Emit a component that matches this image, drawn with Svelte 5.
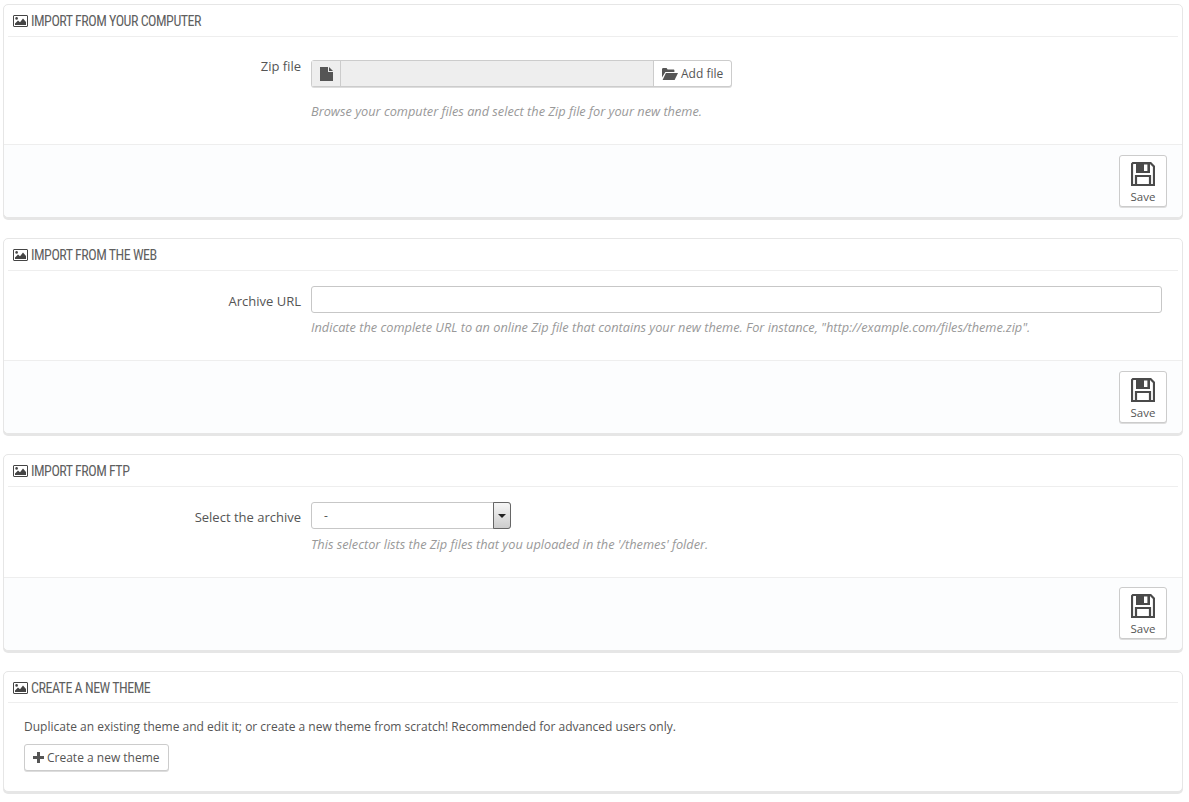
<script lang="ts">
	// mountains and sun of the heading picture icon
	const imageFill = "M2 10V8.5L5 5.5l2 1.8L10 3.5l3 3.5v3z";
</script>

{#snippet heading(title: string)}
	<div class="heading">
		<svg width="15" height="12" viewBox="0 0 15 12" class="himg">
			<rect x="0.5" y="0.5" width="14" height="11" rx="0.5" fill="none" stroke="#444" />
			<circle cx="3.6" cy="3.4" r="1.3" fill="#444" />
			<path d={imageFill} fill="#444" />
		</svg>
		{title}
	</div>
{/snippet}

{#snippet footer()}
	<div class="footer">
		<button class="save">
			<svg width="24" height="24" viewBox="0 0 24 24" fill="none">
				<path d="M2 1h17.5L23 4.5V23H1V2z" stroke="#4a4a4a" stroke-width="2.2" />
				<path d="M5 1h14v10H5z" fill="#4a4a4a" />
				<rect x="13" y="2.5" width="3.4" height="6.5" fill="#fff" />
				<path d="M5 23v-9h14v9" stroke="#4a4a4a" stroke-width="2.2" />
			</svg>
			<span>Save</span>
		</button>
	</div>
{/snippet}

<div class="page">
	<section class="panel">
		{@render heading("Import from your computer")}
		<div class="row first">
			<span class="label">Zip file</span>
			<div class="field">
				<div class="filegroup">
					<span class="addon">
						<svg width="13" height="14" viewBox="0 0 13 14"><path d="M0 0h8v5h5v9H0zM9 0l4 4H9z" fill="#555" /></svg>
					</span>
					<span class="fileval"></span>
					<button class="btn addfile">
						<svg width="16" height="12" viewBox="0 0 16 12"><path d="M0 1.5C0 .7.5 0 1.2 0h3.4l1 1.6h5.8c.6 0 1 .4 1 1V4H3.4L0 9.5zM3.9 5H16l-3.4 7H.6z" fill="#555" /></svg>
						Add file
					</button>
				</div>
				<p class="help wide">Browse your computer files and select the Zip file for your new theme.</p>
			</div>
		</div>
		{@render footer()}
	</section>

	<section class="panel">
		{@render heading("Import from the web")}
		<div class="row">
			<span class="label">Archive URL</span>
			<div class="field">
				<input class="text" type="text" />
				<p class="help">Indicate the complete URL to an online Zip file that contains your new theme. For instance, "http://example.com/files/theme.zip".</p>
			</div>
		</div>
		{@render footer()}
	</section>

	<section class="panel ftp">
		{@render heading("Import from FTP")}
		<div class="row">
			<span class="label">Select the archive</span>
			<div class="field">
				<div class="select">
					<span class="selval">-</span>
					<span class="arrow"><i></i></span>
				</div>
				<p class="help">This selector lists the Zip files that you uploaded in the '/themes' folder.</p>
			</div>
		</div>
		{@render footer()}
	</section>

	<section class="panel last">
		{@render heading("Create a new theme")}
		<div class="create">
			<p>Duplicate an existing theme and edit it; or create a new theme from scratch! Recommended for advanced users only.</p>
			<button class="btn newtheme">
				<svg width="11" height="11" viewBox="0 0 11 11"><path d="M4 0h3v4h4v3H7v4H4V7H0V4h4z" fill="#555" /></svg>
				Create a new theme
			</button>
		</div>
	</section>
</div>

<style>
	:global(body) {
		background: #fff;
		font-family: "Open Sans", "Liberation Sans", sans-serif;
		font-size: 12px;
		color: #555;
	}
	.page {
		padding: 4px 6px 0 3px;
		height: 798px;
		box-sizing: border-box;
	}
	.panel {
		border: 1px solid #e6e6e6;
		border-radius: 5px;
		box-shadow: 0 2px 0 #e6e6e6;
		margin-bottom: 20px;
		background: #fff;
	}
	.heading {
		display: flex;
		align-items: center;
		gap: 3px;
		height: 30px;
		margin: 0 4px;
		padding: 1px 5px 0;
		border-bottom: 1px solid #eee;
		font-family: "Liberation Sans Narrow", "Roboto Condensed", "Open Sans", sans-serif;
		font-size: 14px;
		letter-spacing: -0.48px;
		line-height: 1;
		text-transform: uppercase;
		color: #5f5f5f;
	}
	.last .heading {
		height: 29px;
	}
	.himg {
		flex: none;
	}
	.row {
		display: grid;
		grid-template-columns: 297px 1fr;
		column-gap: 10px;
		padding: 15px 20px 0 0;
		height: 74px;
	}
	.row.first {
		padding-top: 23px;
		height: 84px;
	}
	.ftp .row {
		height: 75px;
	}
	.label {
		text-align: right;
		font-size: 13px;
		line-height: 18px;
		padding-top: 6px;
	}
	.first .label {
		padding-top: 0;
		margin-top: -3px;
	}
	.help {
		margin: 5px 0 0;
		font-size: 12.75px;
		line-height: 18px;
		font-style: italic;
		color: #999;
	}
	.help.wide {
		margin-top: 15px;
	}
	.ftp .help {
		margin-top: 6px;
	}
	.filegroup {
		display: flex;
		width: 421px;
		height: 27px;
		border: 1px solid #ccc;
		border-radius: 3px;
		box-shadow: 0 1px 0 #ddd;
		box-sizing: border-box;
		background: #eee;
	}
	.addon {
		width: 28px;
		display: flex;
		align-items: center;
		justify-content: center;
		border-right: 1px solid #ccc;
		background: #eee;
	}
	.fileval {
		flex: 1;
	}
	.btn {
		display: inline-flex;
		align-items: center;
		gap: 3px;
		font-family: inherit;
		font-size: 12px;
		color: #555;
		background: #fff;
		cursor: pointer;
	}
	.addfile {
		width: 78px;
		padding: 0 0 0 8px;
		border: 0;
		border-left: 1px solid #ccc;
		border-radius: 0 3px 3px 0;
	}
	.text {
		display: block;
		width: 851px;
		height: 27px;
		padding: 0 8px;
		border: 1px solid #c7c7c7;
		border-radius: 3px;
		box-sizing: border-box;
		background: #fff;
		outline: none;
	}
	.select {
		display: flex;
		width: 200px;
		height: 27px;
		border: 1px solid #c7c7c7;
		border-radius: 3px;
		box-sizing: border-box;
	}
	.selval {
		flex: 1;
		padding-left: 12px;
		line-height: 25px;
		color: #555;
	}
	.arrow {
		width: 18px;
		display: flex;
		align-items: center;
		justify-content: center;
		margin: -1px -1px -1px 0;
		border: 1px solid #666;
		border-radius: 0 3px 3px 0;
		box-sizing: border-box;
		background: linear-gradient(#f6f6f6, #cdcdcd);
	}
	.arrow i {
		width: 0;
		height: 0;
		border: 4px solid transparent;
		border-top: 4px solid #222;
		border-bottom: 0;
	}
	.footer {
		display: flex;
		justify-content: flex-end;
		align-items: flex-start;
		height: 62px;
		padding: 10px 15px 0 0;
		border-top: 1px solid #eee;
		background: #fcfdfe;
		border-radius: 0 0 5px 5px;
	}
	.ftp .footer {
		height: 63px;
		padding-top: 9px;
	}
	.save {
		display: flex;
		flex-direction: column;
		align-items: center;
		width: 48px;
		height: 52px;
		padding: 6px 0 0;
		border: 1px solid #ccc;
		border-radius: 3px;
		background: #fff;
		box-shadow: 0 1px 0 #ddd;
		font-family: inherit;
		font-size: 11.5px;
		line-height: 16px;
		color: #555;
		cursor: pointer;
	}
	.save span {
		margin-top: 3px;
	}
	.panel.last {
		margin-bottom: 0;
	}
	.create {
		padding: 15px 20px 20px;
	}
	.create p {
		margin: 0 0 8px;
		line-height: 18px;
	}
	.newtheme {
		height: 27px;
		width: 145px;
		padding: 0 0 0 8px;
		border: 1px solid #ccc;
		border-radius: 3px;
		box-shadow: 0 1px 0 #ddd;
	}
</style>
